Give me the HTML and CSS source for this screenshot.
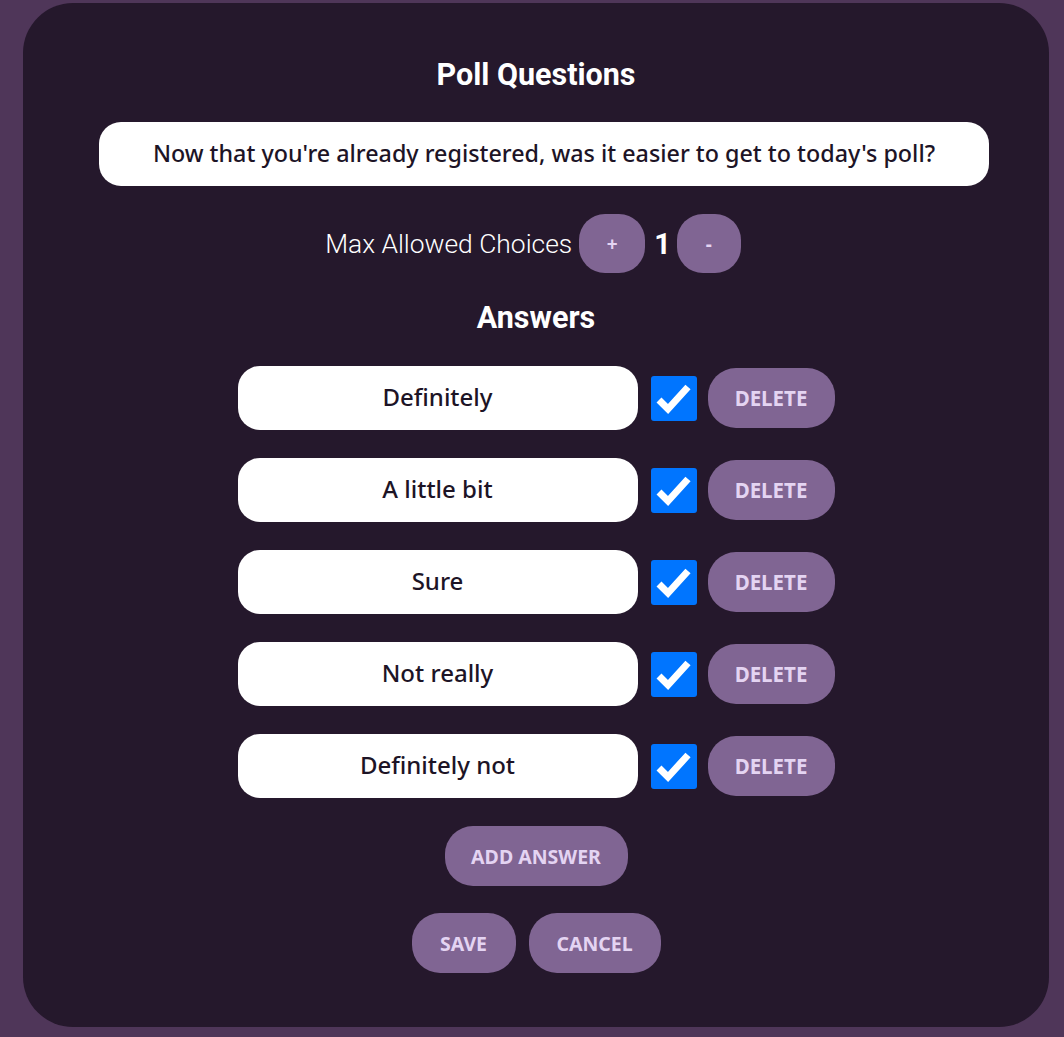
FILE: index.html
```html
<!DOCTYPE html>
<html>
<head>
<meta charset="utf-8">
<link rel="stylesheet" href="styles.css">
</head>
<body>
<div class="page">
  <div class="card">
    <h1 class="title">Poll Questions</h1>
    <div class="question">Now that you're already registered, was it easier to get to today's poll?</div>
    <div class="max-row">
      <span class="max-label">Max Allowed Choices</span>
      <button class="btn btn-sq btn-plus">+</button>
      <span class="max-value">1</span>
      <button class="btn btn-sq btn-minus">-</button>
    </div>
    <h2 class="title answers-title">Answers</h2>
    <div class="answers">
      <div class="answer-row">
        <div class="answer">Definitely</div>
        <span class="check"><svg viewBox="0 0 46 45" width="46" height="45"><path d="M8 24 L17 33 L37 11" fill="none" stroke="#fff" stroke-width="7"/></svg></span>
        <button class="btn btn-del">DELETE</button>
      </div>
      <div class="answer-row">
        <div class="answer">A little bit</div>
        <span class="check"><svg viewBox="0 0 46 45" width="46" height="45"><path d="M8 24 L17 33 L37 11" fill="none" stroke="#fff" stroke-width="7"/></svg></span>
        <button class="btn btn-del">DELETE</button>
      </div>
      <div class="answer-row">
        <div class="answer">Sure</div>
        <span class="check"><svg viewBox="0 0 46 45" width="46" height="45"><path d="M8 24 L17 33 L37 11" fill="none" stroke="#fff" stroke-width="7"/></svg></span>
        <button class="btn btn-del">DELETE</button>
      </div>
      <div class="answer-row">
        <div class="answer">Not really</div>
        <span class="check"><svg viewBox="0 0 46 45" width="46" height="45"><path d="M8 24 L17 33 L37 11" fill="none" stroke="#fff" stroke-width="7"/></svg></span>
        <button class="btn btn-del">DELETE</button>
      </div>
      <div class="answer-row">
        <div class="answer">Definitely not</div>
        <span class="check"><svg viewBox="0 0 46 45" width="46" height="45"><path d="M8 24 L17 33 L37 11" fill="none" stroke="#fff" stroke-width="7"/></svg></span>
        <button class="btn btn-del">DELETE</button>
      </div>
    </div>
    <div class="add-row">
      <button class="btn btn-add">ADD ANSWER</button>
    </div>
    <div class="actions">
      <button class="btn btn-save">SAVE</button>
      <button class="btn btn-cancel">CANCEL</button>
    </div>
  </div>
</div>
</body>
</html>
```

FILE: styles.css
```css
html, body {
  margin: 0;
  padding: 0;
  background: #4f3659;
}
.page {
  padding: 3px 15px 10px 23px;
}
.card {
  background: #25182c;
  border-radius: 50px;
  height: 1024px;
  box-sizing: border-box;
  padding-top: 54px;
  display: flex;
  flex-direction: column;
  align-items: center;
}
.title {
  margin: 0;
  font-family: Roboto, sans-serif;
  font-weight: 700;
  font-size: 30.5px;
  line-height: 36px;
  color: #ffffff;
}
.question {
  margin-top: 29px;
  margin-left: 16px;
  width: 890px;
  height: 64px;
  padding-bottom: 3px;
  border-radius: 22px;
  background: #ffffff;
  color: #1d1426;
  font-family: "Noto Sans", sans-serif;
  font-weight: 500;
  font-size: 23.3px;
  display: flex;
  align-items: center;
  justify-content: center;
  box-sizing: border-box;
}
.max-row {
  margin-top: 28px;
  margin-right: 6px;
  display: flex;
  align-items: center;
  height: 59px;
}
.max-label {
  font-family: Roboto, sans-serif;
  font-weight: 300;
  font-size: 26.4px;
  color: #ffffff;
  margin-right: 7px;
}
.max-value {
  font-family: Roboto, sans-serif;
  font-weight: 700;
  font-size: 29px;
  color: #ffffff;
  margin: 0 6px 0 9px;
}
.btn {
  border: none;
  background: #806593;
  color: #e4d4f2;
  font-family: "Noto Sans", sans-serif;
  font-weight: 700;
  font-size: 19.5px;
  padding: 0;
  cursor: pointer;
}
.btn-sq {
  height: 59px;
  border-radius: 26px;
  font-size: 19px;
}
.btn-plus {
  width: 66px;
}
.btn-minus {
  width: 64px;
}
.answers-title {
  margin-top: 27px;
}
.answers {
  margin-top: 30px;
  display: flex;
  flex-direction: column;
  gap: 28px;
}
.answer-row {
  display: flex;
  align-items: center;
}
.answer {
  width: 400px;
  height: 64px;
  padding-bottom: 4px;
  box-sizing: border-box;
  border-radius: 22px;
  background: #ffffff;
  color: #1d1426;
  font-family: "Noto Sans", sans-serif;
  font-weight: 500;
  font-size: 24px;
  display: flex;
  align-items: center;
  justify-content: center;
}
.check {
  margin-left: 13px;
  width: 46px;
  height: 45px;
  border-radius: 3px;
  background: #0075ff;
  display: block;
}
.check svg {
  display: block;
}
.btn-del {
  margin-left: 11px;
  width: 127px;
  height: 60px;
  border-radius: 28px;
  font-size: 20.5px;
}
.add-row {
  margin-top: 28px;
}
.btn-add {
  width: 183px;
  height: 60px;
  border-radius: 28px;
}
.actions {
  margin-top: 27px;
  display: flex;
  gap: 13px;
}
.btn-save {
  width: 104px;
  height: 60px;
  border-radius: 28px;
}
.btn-cancel {
  width: 132px;
  height: 60px;
  border-radius: 28px;
}
```
